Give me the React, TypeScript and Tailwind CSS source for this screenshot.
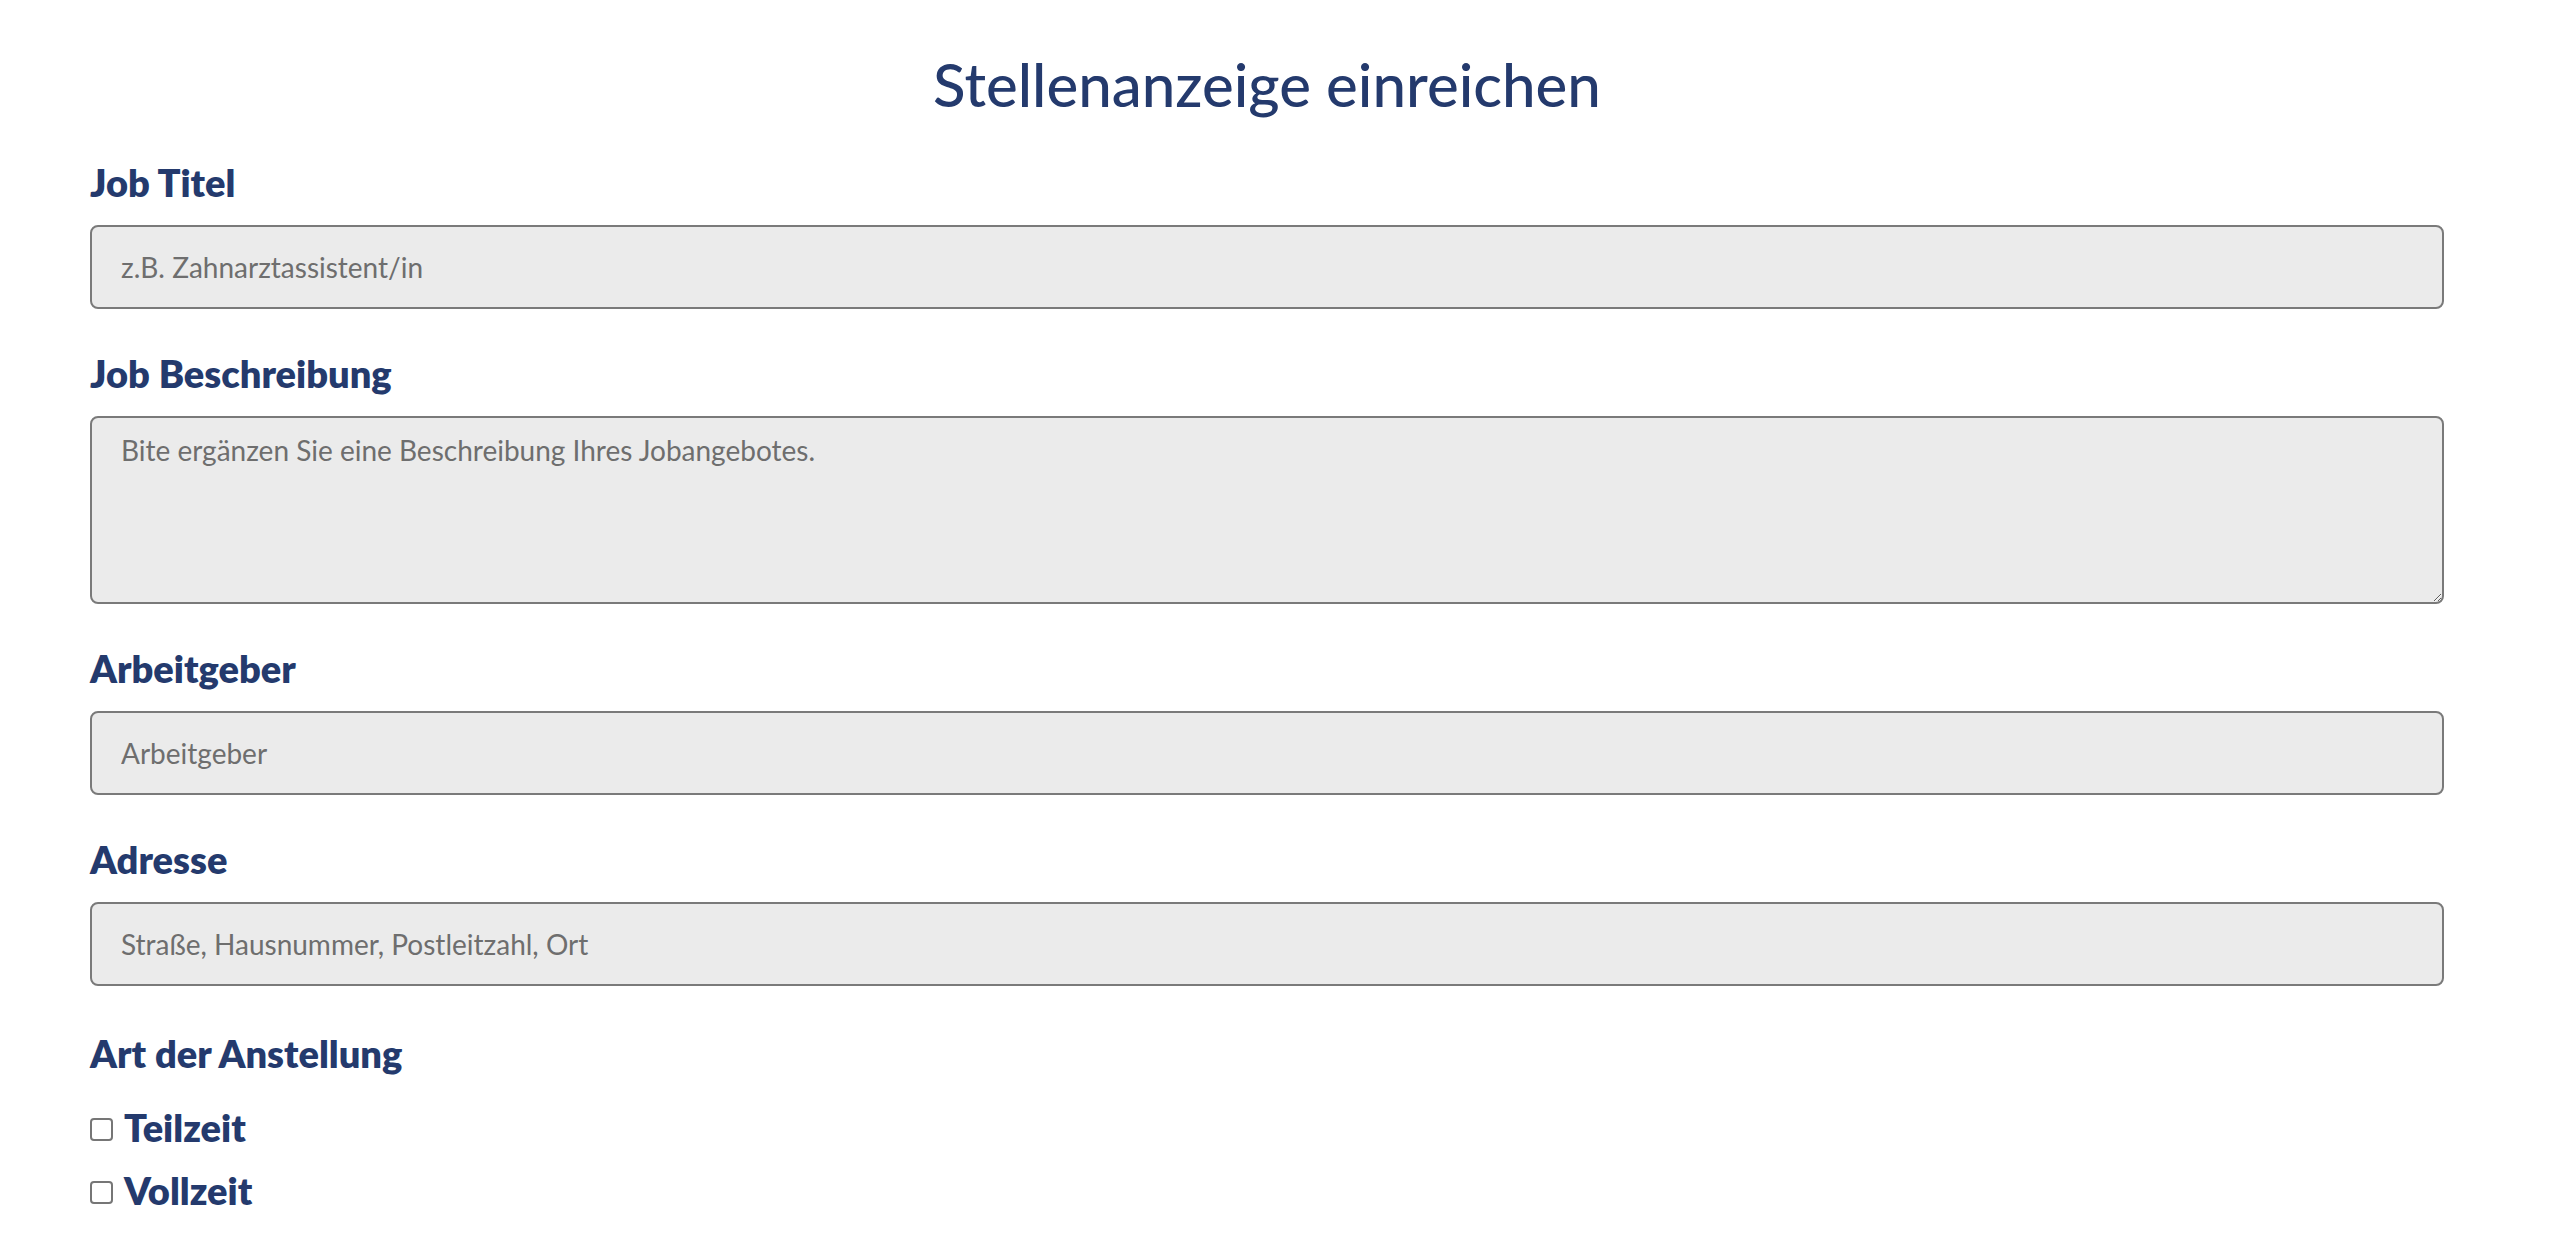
import { useState } from 'react';

const font = "font-['Lato','Noto_Sans',sans-serif]";

function FieldLabel({ children, htmlFor }: { children: string; htmlFor: string }) {
  return (
    <label
      htmlFor={htmlFor}
      className="block text-[38px] leading-[44px] font-extrabold text-[#243a6d] mb-[21px]"
    >
      {children}
    </label>
  );
}

const inputClass =
  'block w-full h-[84px] px-[29px] bg-[#ebebeb] border-2 border-[#7a7a7a] rounded-[8px] text-[28px] text-[#333] placeholder:text-[#6e6e6e] outline-none';

export default function App() {
  const [types, setTypes] = useState<Record<string, boolean>>({ Teilzeit: false, Vollzeit: false });

  return (
    <div className={`${font} min-h-screen bg-white pl-[90px] pr-[116px] pt-[49px] pb-10`}>
      <h1 className="text-center text-[60px] leading-[70px] font-medium text-[#243a6d] mb-[41px]">
        Stellenanzeige einreichen
      </h1>

      <form className="flex flex-col gap-[42px]" onSubmit={(e) => e.preventDefault()}>
        <div>
          <FieldLabel htmlFor="title">Job Titel</FieldLabel>
          <input id="title" type="text" placeholder="z.B. Zahnarztassistent/in" className={inputClass} />
        </div>

        <div>
          <FieldLabel htmlFor="desc">Job Beschreibung</FieldLabel>
          <textarea
            id="desc"
            placeholder="Bite ergänzen Sie eine Beschreibung Ihres Jobangebotes."
            className="block w-full h-[188px] px-[29px] pt-[15px] bg-[#ebebeb] border-2 border-[#7a7a7a] rounded-[8px] text-[28px] leading-[34px] text-[#333] placeholder:text-[#6e6e6e] outline-none"
          />
        </div>

        <div>
          <FieldLabel htmlFor="employer">Arbeitgeber</FieldLabel>
          <input id="employer" type="text" placeholder="Arbeitgeber" className={inputClass} />
        </div>

        <div>
          <FieldLabel htmlFor="address">Adresse</FieldLabel>
          <input
            id="address"
            type="text"
            placeholder="Straße, Hausnummer, Postleitzahl, Ort"
            className={inputClass}
          />
        </div>

        <div className="pt-[3px]">
          <p className="text-[38px] leading-[44px] font-extrabold text-[#243a6d] mb-[21px]">Art der Anstellung</p>
          {['Teilzeit', 'Vollzeit'].map((t) => (
            <label key={t} className="flex items-center gap-[11px] h-[63px] cursor-pointer">
              <input
                type="checkbox"
                checked={types[t]}
                onChange={() => setTypes({ ...types, [t]: !types[t] })}
                className="appearance-none w-[23px] h-[23px] mt-[4px] bg-white border-2 border-[#767676] rounded-[4px] checked:bg-[#243a6d]"
              />
              <span className="text-[38px] leading-[63px] font-extrabold text-[#243a6d]">{t}</span>
            </label>
          ))}
        </div>
      </form>
    </div>
  );
}
